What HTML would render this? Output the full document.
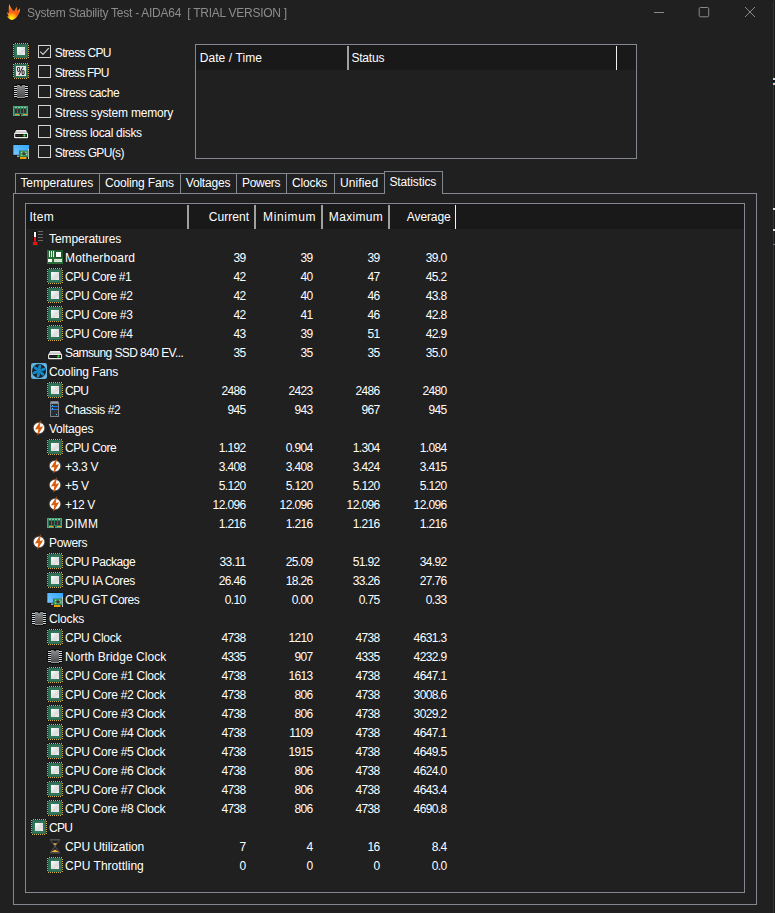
<!DOCTYPE html>
<html lang="en"><head><meta charset="utf-8"><title>System Stability Test - AIDA64</title>
<style>
html,body{margin:0;padding:0;}
body{width:775px;height:913px;overflow:hidden;background:#202020;position:relative;
 font-family:"Liberation Sans",sans-serif;font-size:12px;color:#fff;}
.a{position:absolute;white-space:nowrap;line-height:16px;height:16px;}
.t{position:absolute;white-space:nowrap;line-height:16px;height:16px;transform-origin:0 50%;}
.n{position:absolute;white-space:nowrap;line-height:16px;height:16px;text-align:right;width:60px;letter-spacing:-0.6px;}
.i{position:absolute;width:16px;height:16px;}
.i svg{display:block;}
.b{position:absolute;box-sizing:border-box;border:1px solid #828790;}
.cb{position:absolute;box-sizing:border-box;width:13px;height:13px;border:1px solid #d4d4d4;}
.ln{position:absolute;background:#828790;}
.sep{position:absolute;width:1px;background:#a0a0a0;}
</style></head><body>
<svg width="0" height="0" style="position:absolute"><defs>
<linearGradient id="gw" x1="0" y1="0" x2="1" y2="1"><stop offset="0" stop-color="#ffffff"/><stop offset="0.6" stop-color="#dcdcdc"/><stop offset="1" stop-color="#f0f0f0"/></linearGradient>
<linearGradient id="gc" x1="0" y1="0" x2="0" y2="1"><stop offset="0" stop-color="#8a8a8a"/><stop offset="1" stop-color="#4a4a4a"/></linearGradient>
<linearGradient id="gd" x1="0" y1="0" x2="0" y2="1"><stop offset="0" stop-color="#f2f2f2"/><stop offset="1" stop-color="#b4b4b4"/></linearGradient>
<linearGradient id="gm" x1="0" y1="1" x2="1" y2="0"><stop offset="0" stop-color="#7cc8ff"/><stop offset="1" stop-color="#2fa6ff"/></linearGradient>
<radialGradient id="gf" gradientUnits="userSpaceOnUse" cx="11.6" cy="18.6" r="14"><stop offset="0" stop-color="#fff21a"/><stop offset="0.12" stop-color="#ffdc10"/><stop offset="0.3" stop-color="#ffa010"/><stop offset="0.46" stop-color="#f8641a"/><stop offset="0.6" stop-color="#f6581a"/><stop offset="0.8" stop-color="#ff9014"/><stop offset="1" stop-color="#ffaa20"/></radialGradient>
</defs></svg>

<svg class="a" style="left:0;top:0;width:26px;height:24px" width="26" height="24" viewBox="0 0 26 24"><path d="M9.3 3.8 C9.9 6.6 11.4 8.6 13.2 10.6 L14 10.9 C15.1 9.6 16.1 8.5 16.5 6.5 C16.9 8.4 17 9.6 17.3 10.9 C18.3 10.2 19.3 9.4 19.9 8 C20.3 11 19.2 14 17.2 16.4 C15.6 18.4 13.6 20 11.6 20 C9.9 19.8 8.4 18.3 7 16.5 L8.7 16.3 C7.8 15 7.2 13.6 6.8 12 L8.9 13 C8.5 10 8.7 7 9.3 3.8 Z" fill="url(#gf)"/></svg>
<div class="t" style="left:26.70px;top:5px;letter-spacing:-0.258px;color:#8c8c8c;white-space:pre;will-change:transform">System Stability Test - AIDA64  [ TRIAL VERSION ]</div>
<svg class="a" style="left:640px;top:0;width:135px;height:30px" width="135" height="30" viewBox="0 0 135 30"><g stroke="#8a8a8a" stroke-width="1" fill="none"><path d="M14 12.5 H24"/><rect x="59.2" y="7.5" width="9.5" height="9.3" rx="1.2"/><path d="M105 7 L115 17 M115 7 L105 17"/></g></svg>
<div class="i" style="left:13px;top:43px;will-change:transform"><svg width="16" height="16" viewBox="0 0 16 16" shape-rendering="crispEdges"><rect x="0" y="0" width="16" height="16" fill="#141414"/><rect x="1" y="1" width="14" height="14" fill="#2a6650"/><rect x="2" y="2" width="12" height="12" fill="#33755a"/><rect x="4" y="4" width="8" height="8" fill="url(#gw)"/><g fill="#e0b040"><rect x="2" y="0" width="1" height="1"/><rect x="4" y="0" width="1" height="1"/><rect x="6" y="0" width="1" height="1"/><rect x="8" y="0" width="1" height="1"/><rect x="10" y="0" width="1" height="1"/><rect x="12" y="0" width="1" height="1"/><rect x="14" y="0" width="1" height="1"/><rect x="1" y="15" width="1" height="1"/><rect x="3" y="15" width="1" height="1"/><rect x="5" y="15" width="1" height="1"/><rect x="7" y="15" width="1" height="1"/><rect x="9" y="15" width="1" height="1"/><rect x="11" y="15" width="1" height="1"/><rect x="13" y="15" width="1" height="1"/><rect x="0" y="1" width="1" height="1"/><rect x="0" y="3" width="1" height="1"/><rect x="0" y="5" width="1" height="1"/><rect x="0" y="7" width="1" height="1"/><rect x="0" y="9" width="1" height="1"/><rect x="0" y="11" width="1" height="1"/><rect x="0" y="13" width="1" height="1"/><rect x="15" y="2" width="1" height="1"/><rect x="15" y="4" width="1" height="1"/><rect x="15" y="6" width="1" height="1"/><rect x="15" y="8" width="1" height="1"/><rect x="15" y="10" width="1" height="1"/><rect x="15" y="12" width="1" height="1"/><rect x="15" y="14" width="1" height="1"/></g></svg></div>
<div class="cb" style="left:38px;top:45px"><svg width="11" height="11" viewBox="0 0 11 11" style="display:block"><path d="M1.3 5.6 L4 8.3 L9.8 2.2" fill="none" stroke="#cfcfcf" stroke-width="1.2"/></svg></div>
<div class="t" style="left:54.80px;top:45px;letter-spacing:-0.669px;">Stress CPU</div>
<div class="i" style="left:13px;top:63px;will-change:transform"><svg width="16" height="16" viewBox="0 0 16 16" ><rect x="0" y="0" width="16" height="16" fill="#141414" shape-rendering="crispEdges"/><rect x="1" y="1" width="14" height="14" fill="#2a6650" shape-rendering="crispEdges"/><rect x="2" y="2" width="12" height="12" fill="#33755a" shape-rendering="crispEdges"/><rect x="3" y="3" width="10" height="10" fill="#e4e4e4" shape-rendering="crispEdges"/><g fill="#e0b040" shape-rendering="crispEdges"><rect x="2" y="0" width="1" height="1"/><rect x="4" y="0" width="1" height="1"/><rect x="6" y="0" width="1" height="1"/><rect x="8" y="0" width="1" height="1"/><rect x="10" y="0" width="1" height="1"/><rect x="12" y="0" width="1" height="1"/><rect x="14" y="0" width="1" height="1"/><rect x="1" y="15" width="1" height="1"/><rect x="3" y="15" width="1" height="1"/><rect x="5" y="15" width="1" height="1"/><rect x="7" y="15" width="1" height="1"/><rect x="9" y="15" width="1" height="1"/><rect x="11" y="15" width="1" height="1"/><rect x="13" y="15" width="1" height="1"/><rect x="0" y="1" width="1" height="1"/><rect x="0" y="3" width="1" height="1"/><rect x="0" y="5" width="1" height="1"/><rect x="0" y="7" width="1" height="1"/><rect x="0" y="9" width="1" height="1"/><rect x="0" y="11" width="1" height="1"/><rect x="0" y="13" width="1" height="1"/><rect x="15" y="2" width="1" height="1"/><rect x="15" y="4" width="1" height="1"/><rect x="15" y="6" width="1" height="1"/><rect x="15" y="8" width="1" height="1"/><rect x="15" y="10" width="1" height="1"/><rect x="15" y="12" width="1" height="1"/><rect x="15" y="14" width="1" height="1"/></g><text transform="translate(8,12.4) scale(0.8,1)" font-family="Liberation Sans, sans-serif" font-size="11" text-anchor="middle" fill="#000" stroke="#000" stroke-width="0.2">%</text></svg></div>
<div class="cb" style="left:38px;top:65px"></div>
<div class="t" style="left:54.80px;top:65px;letter-spacing:-0.734px;">Stress FPU</div>
<div class="i" style="left:13px;top:83px;will-change:transform"><svg width="16" height="16" viewBox="0 0 16 16" ><rect x="0.5" y="2.2" width="15" height="12.6" rx="0.8" fill="#0b0b0b"/><rect x="3.2" y="1" width="9.6" height="15" rx="1.2" fill="#0b0b0b"/><g shape-rendering="crispEdges"><rect x="1" y="3" width="3" height="1" fill="#cdd5df"/><rect x="12" y="3" width="3" height="1" fill="#cdd5df"/><rect x="1" y="5" width="3" height="1" fill="#cdd5df"/><rect x="12" y="5" width="3" height="1" fill="#cdd5df"/><rect x="1" y="7" width="3" height="1" fill="#cdd5df"/><rect x="12" y="7" width="3" height="1" fill="#cdd5df"/><rect x="1" y="9" width="3" height="1" fill="#cdd5df"/><rect x="12" y="9" width="3" height="1" fill="#cdd5df"/><rect x="1" y="11" width="3" height="1" fill="#cdd5df"/><rect x="12" y="11" width="3" height="1" fill="#cdd5df"/><rect x="1" y="13" width="3" height="1" fill="#cdd5df"/><rect x="12" y="13" width="3" height="1" fill="#cdd5df"/></g><rect x="4" y="2" width="8" height="12.8" fill="url(#gc)"/><path d="M5.4 1 L8 3.6 L10.6 1 Z" fill="#0b0b0b"/><path d="M4 2 L5.6 2 L8 4.4 L10.4 2 L12 2 L12 2.8 L10.8 2.8 L8 5.4 L5.2 2.8 L4 2.8 Z" fill="#9c9c9c" opacity="0.55"/><rect x="4" y="14" width="8" height="0.8" fill="#a8a8a8"/></svg></div>
<div class="cb" style="left:38px;top:85px"></div>
<div class="t" style="left:54.80px;top:85px;letter-spacing:-0.415px;">Stress cache</div>
<div class="i" style="left:13px;top:103px;will-change:transform"><svg width="16" height="16" viewBox="0 0 16 16" shape-rendering="crispEdges"><g transform="translate(0,3)"><rect x="0" y="0" width="15" height="10" fill="#4aa97c"/><rect x="1" y="1" width="13" height="8" fill="#2c7a56"/><rect x="2" y="1" width="2" height="1" fill="#8fc9a0"/><rect x="5" y="1" width="2" height="1" fill="#8fc9a0"/><rect x="8" y="1" width="2" height="1" fill="#8fc9a0"/><rect x="11" y="1" width="2" height="1" fill="#8fc9a0"/><rect x="2" y="3" width="2" height="4" fill="#3a2a30"/><rect x="5" y="3" width="2" height="4" fill="#3a2a30"/><rect x="8" y="3" width="2" height="4" fill="#3a2a30"/><rect x="11" y="3" width="2" height="4" fill="#3a2a30"/><rect x="2" y="8" width="4" height="1" fill="#e89a3c"/><rect x="10" y="8" width="4" height="1" fill="#e89a3c"/><rect x="7" y="8" width="1" height="2" fill="#1a1a1a"/></g></svg></div>
<div class="cb" style="left:38px;top:105px"></div>
<div class="t" style="left:54.80px;top:105px;letter-spacing:-0.181px;">Stress system memory</div>
<div class="i" style="left:13px;top:123px;will-change:transform"><svg width="16" height="16" viewBox="0 0 16 16" ><path d="M2.9 6.5 L13.3 6.5 L15.7 10 L15.7 15 Q15.7 15.7 15 15.7 L1.2 15.7 Q0.5 15.7 0.5 15 L0.5 10 Z" fill="#141414"/><path d="M3.3 7.1 L12.9 7.1 L15 10.4 L1.2 10.4 Z" fill="url(#gd)"/><rect x="1.1" y="10.1" width="14" height="5.1" rx="0.8" fill="#ededed"/><rect x="2.2" y="11" width="11.8" height="2.9" rx="0.3" fill="#141414"/><rect x="2.6" y="11.9" width="8" height="1" fill="#2c2c2c"/><circle cx="11.4" cy="12.45" r="1.5" fill="#1f8f1f" opacity="0.7"/><circle cx="11.4" cy="12.45" r="0.95" fill="#40f040"/></svg></div>
<div class="cb" style="left:38px;top:125px"></div>
<div class="t" style="left:54.80px;top:125px;letter-spacing:-0.317px;">Stress local disks</div>
<div class="i" style="left:13px;top:143px;will-change:transform"><svg width="16" height="16" viewBox="0 0 16 16" ><rect x="0" y="1.5" width="16" height="10.8" fill="#151210"/><rect x="0.3" y="2" width="15.7" height="9.8" fill="url(#gm)"/><rect x="4" y="12.6" width="3" height="1.2" fill="#b9c6e6"/><rect x="15" y="6" width="1.1" height="10" fill="#c9c9c9"/><rect x="6" y="7.6" width="9.2" height="6.4" fill="#1d6b3c"/><rect x="6.6" y="8.1" width="8.4" height="5.4" fill="#3d9a5c"/><rect x="9.5" y="9.5" width="3" height="2.3" fill="#4a2c36"/><g fill="#dfe8df"><rect x="8.2" y="8.8" width="1" height="1"/><rect x="12.3" y="8.8" width="1" height="1"/><rect x="8.2" y="11.8" width="1" height="1"/><rect x="13.2" y="10.8" width="1" height="1"/></g><rect x="7" y="14" width="6.4" height="2" fill="#f5a800"/><rect x="8.6" y="14" width="0.5" height="2" fill="#d88a00"/><rect x="10.2" y="14" width="0.5" height="2" fill="#d88a00"/><rect x="11.8" y="14" width="0.5" height="2" fill="#d88a00"/></svg></div>
<div class="cb" style="left:38px;top:145px"></div>
<div class="t" style="left:54.80px;top:145px;letter-spacing:-0.642px;">Stress GPU(s)</div>
<div class="b" style="left:195px;top:44px;width:442px;height:115px"></div>
<div class="a" style="left:196px;top:45px;width:440px;height:25px;background:#191919"></div>
<div class="t" style="left:199.70px;top:50px;letter-spacing:0.086px;">Date / Time</div>
<div class="t" style="left:351.40px;top:50px;letter-spacing:-0.205px;">Status</div>
<div class="sep" style="left:347px;top:46px;height:24px;width:2px"></div>
<div class="sep" style="left:616px;top:46px;height:24px;background:#f0f0f0"></div>
<div class="b" style="left:15px;top:173px;width:85px;height:21px;border-bottom:none"></div>
<div class="t" style="left:20.40px;top:175px;letter-spacing:-0.048px;">Temperatures</div>
<div class="b" style="left:99px;top:173px;width:82px;height:21px;border-bottom:none"></div>
<div class="t" style="left:105.00px;top:175px;letter-spacing:-0.160px;">Cooling Fans</div>
<div class="b" style="left:180px;top:173px;width:57px;height:21px;border-bottom:none"></div>
<div class="t" style="left:185.80px;top:175px;letter-spacing:-0.206px;">Voltages</div>
<div class="b" style="left:236px;top:173px;width:51px;height:21px;border-bottom:none"></div>
<div class="t" style="left:242.00px;top:175px;letter-spacing:-0.303px;">Powers</div>
<div class="b" style="left:286px;top:173px;width:49px;height:21px;border-bottom:none"></div>
<div class="t" style="left:292.00px;top:175px;letter-spacing:-0.136px;">Clocks</div>
<div class="b" style="left:334px;top:173px;width:51px;height:21px;border-bottom:none"></div>
<div class="t" style="left:340.00px;top:175px;letter-spacing:0.120px;">Unified</div>
<div class="b" style="left:13px;top:193px;width:744px;height:712px"></div>
<div class="b" style="left:384px;top:171px;width:59px;height:23px;border-bottom:none;background:#202020"></div>
<div class="t" style="left:389.40px;top:174px;letter-spacing:-0.122px;">Statistics</div>
<div class="b" style="left:25px;top:203px;width:720px;height:690px"></div>
<div class="a" style="left:26px;top:204px;width:718px;height:25px;background:#191919"></div>
<div class="t" style="left:29.40px;top:209px;letter-spacing:0.364px;">Item</div>
<div class="t" style="left:208.80px;top:209px;letter-spacing:0.055px;">Current</div>
<div class="t" style="left:263.00px;top:209px;letter-spacing:0.647px;">Minimum</div>
<div class="t" style="left:328.80px;top:209px;letter-spacing:0.341px;">Maximum</div>
<div class="t" style="left:406.80px;top:209px;letter-spacing:-0.098px;">Average</div>
<div class="sep" style="left:187px;top:205px;height:24px;width:2px"></div>
<div class="sep" style="left:254px;top:205px;height:24px;width:2px"></div>
<div class="sep" style="left:321px;top:205px;height:24px;width:2px"></div>
<div class="sep" style="left:388px;top:205px;height:24px;width:2px"></div>
<div class="sep" style="left:455px;top:205px;height:24px;background:#f0f0f0"></div>
<div class="i" style="left:31px;top:230px"><svg width="16" height="16" viewBox="0 0 16 16" ><g shape-rendering="crispEdges"><rect x="2" y="1" width="4" height="12" fill="#16191a"/><rect x="3" y="2" width="2" height="5" fill="#ffffff"/><rect x="3" y="7" width="2" height="6" fill="#f01010"/><rect x="7" y="1" width="5" height="1" fill="#686868"/><rect x="7" y="4" width="5" height="1" fill="#686868"/><rect x="7" y="7" width="5" height="1" fill="#686868"/><rect x="7" y="10" width="5" height="1" fill="#686868"/></g><rect x="1.6" y="11.6" width="5.2" height="4" rx="1.2" fill="#2a3a3c"/><rect x="2.2" y="12" width="4" height="3.1" rx="0.8" fill="#f01010"/></svg></div>
<div class="t" style="left:49.00px;top:231px;letter-spacing:-0.098px;">Temperatures</div>
<div class="i" style="left:47px;top:249px"><svg width="16" height="16" viewBox="0 0 16 16" shape-rendering="crispEdges"><rect x="0" y="1" width="16" height="14" fill="#2c6e3a"/><rect x="8" y="1" width="8" height="8" fill="#1f5a2c"/><rect x="2" y="2" width="1" height="6" fill="#f4f8f0"/><rect x="4" y="2" width="1" height="6" fill="#f4f8f0"/><rect x="6" y="2" width="1" height="6" fill="#f4f8f0"/><rect x="9" y="3" width="5" height="5" fill="#ffffff"/><rect x="1" y="10" width="4" height="3" fill="#ffffff"/><rect x="7" y="10" width="8" height="3" fill="#dfe8d6"/><rect x="7" y="11" width="8" height="1" fill="#cbd8c2"/></svg></div>
<div class="t" style="left:65.00px;top:250px;letter-spacing:0.196px;">Motherboard</div>
<div class="n" style="left:185.7px;top:250px">39</div>
<div class="n" style="left:252.7px;top:250px">39</div>
<div class="n" style="left:319.7px;top:250px">39</div>
<div class="n" style="left:386.7px;top:250px">39.0</div>
<div class="i" style="left:47px;top:268px"><svg width="16" height="16" viewBox="0 0 16 16" shape-rendering="crispEdges"><rect x="0" y="0" width="16" height="16" fill="#141414"/><rect x="1" y="1" width="14" height="14" fill="#2a6650"/><rect x="2" y="2" width="12" height="12" fill="#33755a"/><rect x="4" y="4" width="8" height="8" fill="url(#gw)"/><g fill="#e0b040"><rect x="2" y="0" width="1" height="1"/><rect x="4" y="0" width="1" height="1"/><rect x="6" y="0" width="1" height="1"/><rect x="8" y="0" width="1" height="1"/><rect x="10" y="0" width="1" height="1"/><rect x="12" y="0" width="1" height="1"/><rect x="14" y="0" width="1" height="1"/><rect x="1" y="15" width="1" height="1"/><rect x="3" y="15" width="1" height="1"/><rect x="5" y="15" width="1" height="1"/><rect x="7" y="15" width="1" height="1"/><rect x="9" y="15" width="1" height="1"/><rect x="11" y="15" width="1" height="1"/><rect x="13" y="15" width="1" height="1"/><rect x="0" y="1" width="1" height="1"/><rect x="0" y="3" width="1" height="1"/><rect x="0" y="5" width="1" height="1"/><rect x="0" y="7" width="1" height="1"/><rect x="0" y="9" width="1" height="1"/><rect x="0" y="11" width="1" height="1"/><rect x="0" y="13" width="1" height="1"/><rect x="15" y="2" width="1" height="1"/><rect x="15" y="4" width="1" height="1"/><rect x="15" y="6" width="1" height="1"/><rect x="15" y="8" width="1" height="1"/><rect x="15" y="10" width="1" height="1"/><rect x="15" y="12" width="1" height="1"/><rect x="15" y="14" width="1" height="1"/></g></svg></div>
<div class="t" style="left:65.00px;top:269px;letter-spacing:-0.470px;">CPU Core #1</div>
<div class="n" style="left:185.7px;top:269px">42</div>
<div class="n" style="left:252.7px;top:269px">40</div>
<div class="n" style="left:319.7px;top:269px">47</div>
<div class="n" style="left:386.7px;top:269px">45.2</div>
<div class="i" style="left:47px;top:287px"><svg width="16" height="16" viewBox="0 0 16 16" shape-rendering="crispEdges"><rect x="0" y="0" width="16" height="16" fill="#141414"/><rect x="1" y="1" width="14" height="14" fill="#2a6650"/><rect x="2" y="2" width="12" height="12" fill="#33755a"/><rect x="4" y="4" width="8" height="8" fill="url(#gw)"/><g fill="#e0b040"><rect x="2" y="0" width="1" height="1"/><rect x="4" y="0" width="1" height="1"/><rect x="6" y="0" width="1" height="1"/><rect x="8" y="0" width="1" height="1"/><rect x="10" y="0" width="1" height="1"/><rect x="12" y="0" width="1" height="1"/><rect x="14" y="0" width="1" height="1"/><rect x="1" y="15" width="1" height="1"/><rect x="3" y="15" width="1" height="1"/><rect x="5" y="15" width="1" height="1"/><rect x="7" y="15" width="1" height="1"/><rect x="9" y="15" width="1" height="1"/><rect x="11" y="15" width="1" height="1"/><rect x="13" y="15" width="1" height="1"/><rect x="0" y="1" width="1" height="1"/><rect x="0" y="3" width="1" height="1"/><rect x="0" y="5" width="1" height="1"/><rect x="0" y="7" width="1" height="1"/><rect x="0" y="9" width="1" height="1"/><rect x="0" y="11" width="1" height="1"/><rect x="0" y="13" width="1" height="1"/><rect x="15" y="2" width="1" height="1"/><rect x="15" y="4" width="1" height="1"/><rect x="15" y="6" width="1" height="1"/><rect x="15" y="8" width="1" height="1"/><rect x="15" y="10" width="1" height="1"/><rect x="15" y="12" width="1" height="1"/><rect x="15" y="14" width="1" height="1"/></g></svg></div>
<div class="t" style="left:65.00px;top:288px;letter-spacing:-0.352px;">CPU Core #2</div>
<div class="n" style="left:185.7px;top:288px">42</div>
<div class="n" style="left:252.7px;top:288px">40</div>
<div class="n" style="left:319.7px;top:288px">46</div>
<div class="n" style="left:386.7px;top:288px">43.8</div>
<div class="i" style="left:47px;top:306px"><svg width="16" height="16" viewBox="0 0 16 16" shape-rendering="crispEdges"><rect x="0" y="0" width="16" height="16" fill="#141414"/><rect x="1" y="1" width="14" height="14" fill="#2a6650"/><rect x="2" y="2" width="12" height="12" fill="#33755a"/><rect x="4" y="4" width="8" height="8" fill="url(#gw)"/><g fill="#e0b040"><rect x="2" y="0" width="1" height="1"/><rect x="4" y="0" width="1" height="1"/><rect x="6" y="0" width="1" height="1"/><rect x="8" y="0" width="1" height="1"/><rect x="10" y="0" width="1" height="1"/><rect x="12" y="0" width="1" height="1"/><rect x="14" y="0" width="1" height="1"/><rect x="1" y="15" width="1" height="1"/><rect x="3" y="15" width="1" height="1"/><rect x="5" y="15" width="1" height="1"/><rect x="7" y="15" width="1" height="1"/><rect x="9" y="15" width="1" height="1"/><rect x="11" y="15" width="1" height="1"/><rect x="13" y="15" width="1" height="1"/><rect x="0" y="1" width="1" height="1"/><rect x="0" y="3" width="1" height="1"/><rect x="0" y="5" width="1" height="1"/><rect x="0" y="7" width="1" height="1"/><rect x="0" y="9" width="1" height="1"/><rect x="0" y="11" width="1" height="1"/><rect x="0" y="13" width="1" height="1"/><rect x="15" y="2" width="1" height="1"/><rect x="15" y="4" width="1" height="1"/><rect x="15" y="6" width="1" height="1"/><rect x="15" y="8" width="1" height="1"/><rect x="15" y="10" width="1" height="1"/><rect x="15" y="12" width="1" height="1"/><rect x="15" y="14" width="1" height="1"/></g></svg></div>
<div class="t" style="left:65.00px;top:307px;letter-spacing:-0.352px;">CPU Core #3</div>
<div class="n" style="left:185.7px;top:307px">42</div>
<div class="n" style="left:252.7px;top:307px">41</div>
<div class="n" style="left:319.7px;top:307px">46</div>
<div class="n" style="left:386.7px;top:307px">42.8</div>
<div class="i" style="left:47px;top:325px"><svg width="16" height="16" viewBox="0 0 16 16" shape-rendering="crispEdges"><rect x="0" y="0" width="16" height="16" fill="#141414"/><rect x="1" y="1" width="14" height="14" fill="#2a6650"/><rect x="2" y="2" width="12" height="12" fill="#33755a"/><rect x="4" y="4" width="8" height="8" fill="url(#gw)"/><g fill="#e0b040"><rect x="2" y="0" width="1" height="1"/><rect x="4" y="0" width="1" height="1"/><rect x="6" y="0" width="1" height="1"/><rect x="8" y="0" width="1" height="1"/><rect x="10" y="0" width="1" height="1"/><rect x="12" y="0" width="1" height="1"/><rect x="14" y="0" width="1" height="1"/><rect x="1" y="15" width="1" height="1"/><rect x="3" y="15" width="1" height="1"/><rect x="5" y="15" width="1" height="1"/><rect x="7" y="15" width="1" height="1"/><rect x="9" y="15" width="1" height="1"/><rect x="11" y="15" width="1" height="1"/><rect x="13" y="15" width="1" height="1"/><rect x="0" y="1" width="1" height="1"/><rect x="0" y="3" width="1" height="1"/><rect x="0" y="5" width="1" height="1"/><rect x="0" y="7" width="1" height="1"/><rect x="0" y="9" width="1" height="1"/><rect x="0" y="11" width="1" height="1"/><rect x="0" y="13" width="1" height="1"/><rect x="15" y="2" width="1" height="1"/><rect x="15" y="4" width="1" height="1"/><rect x="15" y="6" width="1" height="1"/><rect x="15" y="8" width="1" height="1"/><rect x="15" y="10" width="1" height="1"/><rect x="15" y="12" width="1" height="1"/><rect x="15" y="14" width="1" height="1"/></g></svg></div>
<div class="t" style="left:65.00px;top:326px;letter-spacing:-0.352px;">CPU Core #4</div>
<div class="n" style="left:185.7px;top:326px">43</div>
<div class="n" style="left:252.7px;top:326px">39</div>
<div class="n" style="left:319.7px;top:326px">51</div>
<div class="n" style="left:386.7px;top:326px">42.9</div>
<div class="i" style="left:47px;top:344px"><svg width="16" height="16" viewBox="0 0 16 16" ><path d="M2.9 6.5 L13.3 6.5 L15.7 10 L15.7 15 Q15.7 15.7 15 15.7 L1.2 15.7 Q0.5 15.7 0.5 15 L0.5 10 Z" fill="#141414"/><path d="M3.3 7.1 L12.9 7.1 L15 10.4 L1.2 10.4 Z" fill="url(#gd)"/><rect x="1.1" y="10.1" width="14" height="5.1" rx="0.8" fill="#ededed"/><rect x="2.2" y="11" width="11.8" height="2.9" rx="0.3" fill="#141414"/><rect x="2.6" y="11.9" width="8" height="1" fill="#2c2c2c"/><circle cx="11.4" cy="12.45" r="1.5" fill="#1f8f1f" opacity="0.7"/><circle cx="11.4" cy="12.45" r="0.95" fill="#40f040"/></svg></div>
<div class="t" style="left:65.00px;top:345px;letter-spacing:-0.577px;">Samsung SSD 840 EV...</div>
<div class="n" style="left:185.7px;top:345px">35</div>
<div class="n" style="left:252.7px;top:345px">35</div>
<div class="n" style="left:319.7px;top:345px">35</div>
<div class="n" style="left:386.7px;top:345px">35.0</div>
<div class="i" style="left:31px;top:363px"><svg width="16" height="16" viewBox="0 0 16 16" ><rect x="0" y="0" width="16" height="16" rx="2.2" fill="#62b4e0"/><circle cx="8" cy="8" r="7" fill="#1b1d20"/><ellipse transform="rotate(10 8 8)" cx="8" cy="4" rx="1.55" ry="2.7" fill="#1487c6"/><ellipse transform="rotate(70 8 8)" cx="8" cy="4" rx="1.55" ry="2.7" fill="#1487c6"/><ellipse transform="rotate(130 8 8)" cx="8" cy="4" rx="1.55" ry="2.7" fill="#1487c6"/><ellipse transform="rotate(190 8 8)" cx="8" cy="4" rx="1.55" ry="2.7" fill="#1487c6"/><ellipse transform="rotate(250 8 8)" cx="8" cy="4" rx="1.55" ry="2.7" fill="#1487c6"/><ellipse transform="rotate(310 8 8)" cx="8" cy="4" rx="1.55" ry="2.7" fill="#1487c6"/><circle cx="8" cy="8" r="2.2" fill="#1487c6"/></svg></div>
<div class="t" style="left:49.00px;top:364px;letter-spacing:-0.127px;">Cooling Fans</div>
<div class="i" style="left:47px;top:382px"><svg width="16" height="16" viewBox="0 0 16 16" shape-rendering="crispEdges"><rect x="0" y="0" width="16" height="16" fill="#141414"/><rect x="1" y="1" width="14" height="14" fill="#2a6650"/><rect x="2" y="2" width="12" height="12" fill="#33755a"/><rect x="4" y="4" width="8" height="8" fill="url(#gw)"/><g fill="#e0b040"><rect x="2" y="0" width="1" height="1"/><rect x="4" y="0" width="1" height="1"/><rect x="6" y="0" width="1" height="1"/><rect x="8" y="0" width="1" height="1"/><rect x="10" y="0" width="1" height="1"/><rect x="12" y="0" width="1" height="1"/><rect x="14" y="0" width="1" height="1"/><rect x="1" y="15" width="1" height="1"/><rect x="3" y="15" width="1" height="1"/><rect x="5" y="15" width="1" height="1"/><rect x="7" y="15" width="1" height="1"/><rect x="9" y="15" width="1" height="1"/><rect x="11" y="15" width="1" height="1"/><rect x="13" y="15" width="1" height="1"/><rect x="0" y="1" width="1" height="1"/><rect x="0" y="3" width="1" height="1"/><rect x="0" y="5" width="1" height="1"/><rect x="0" y="7" width="1" height="1"/><rect x="0" y="9" width="1" height="1"/><rect x="0" y="11" width="1" height="1"/><rect x="0" y="13" width="1" height="1"/><rect x="15" y="2" width="1" height="1"/><rect x="15" y="4" width="1" height="1"/><rect x="15" y="6" width="1" height="1"/><rect x="15" y="8" width="1" height="1"/><rect x="15" y="10" width="1" height="1"/><rect x="15" y="12" width="1" height="1"/><rect x="15" y="14" width="1" height="1"/></g></svg></div>
<div class="t" style="left:65.00px;top:383px;letter-spacing:-0.715px;">CPU</div>
<div class="n" style="left:185.7px;top:383px">2486</div>
<div class="n" style="left:252.7px;top:383px">2423</div>
<div class="n" style="left:319.7px;top:383px">2486</div>
<div class="n" style="left:386.7px;top:383px">2480</div>
<div class="i" style="left:47px;top:401px"><svg width="16" height="16" viewBox="0 0 16 16" ><path d="M3 16 V1.6 Q3 0 4.6 0 H10.4 Q12 0 12 1.6 V16 Z" fill="#7d828c"/><rect x="4" y="2.6" width="7" height="12.4" fill="#2b2d33"/><rect x="4" y="1" width="7" height="1.6" fill="#9a9fa8"/><g shape-rendering="crispEdges"><rect x="4" y="5" width="7" height="1" fill="#1e7fff"/><rect x="4" y="8" width="7" height="1" fill="#1e7fff"/><rect x="5" y="4" width="1" height="1" fill="#4fd8f0"/><rect x="5" y="7" width="1" height="1" fill="#4fd8f0"/><rect x="9" y="13" width="1" height="1" fill="#4fd8f0"/></g></svg></div>
<div class="t" style="left:65.00px;top:402px;letter-spacing:-0.417px;">Chassis #2</div>
<div class="n" style="left:185.7px;top:402px">945</div>
<div class="n" style="left:252.7px;top:402px">943</div>
<div class="n" style="left:319.7px;top:402px">967</div>
<div class="n" style="left:386.7px;top:402px">945</div>
<div class="i" style="left:31px;top:420px"><svg width="16" height="16" viewBox="0 0 16 16" ><circle cx="8" cy="8" r="6.2" fill="#4a4a4a"/><circle cx="8" cy="8" r="5.3" fill="#ffffff"/><path d="M9.9 0 L3.9 9.5 L7.3 8.9 L6.3 15.9 L12.2 6.3 L8.8 7 Z" fill="#d95f0e"/></svg></div>
<div class="t" style="left:49.00px;top:421px;letter-spacing:-0.231px;">Voltages</div>
<div class="i" style="left:47px;top:439px"><svg width="16" height="16" viewBox="0 0 16 16" shape-rendering="crispEdges"><rect x="0" y="0" width="16" height="16" fill="#141414"/><rect x="1" y="1" width="14" height="14" fill="#2a6650"/><rect x="2" y="2" width="12" height="12" fill="#33755a"/><rect x="4" y="4" width="8" height="8" fill="url(#gw)"/><g fill="#e0b040"><rect x="2" y="0" width="1" height="1"/><rect x="4" y="0" width="1" height="1"/><rect x="6" y="0" width="1" height="1"/><rect x="8" y="0" width="1" height="1"/><rect x="10" y="0" width="1" height="1"/><rect x="12" y="0" width="1" height="1"/><rect x="14" y="0" width="1" height="1"/><rect x="1" y="15" width="1" height="1"/><rect x="3" y="15" width="1" height="1"/><rect x="5" y="15" width="1" height="1"/><rect x="7" y="15" width="1" height="1"/><rect x="9" y="15" width="1" height="1"/><rect x="11" y="15" width="1" height="1"/><rect x="13" y="15" width="1" height="1"/><rect x="0" y="1" width="1" height="1"/><rect x="0" y="3" width="1" height="1"/><rect x="0" y="5" width="1" height="1"/><rect x="0" y="7" width="1" height="1"/><rect x="0" y="9" width="1" height="1"/><rect x="0" y="11" width="1" height="1"/><rect x="0" y="13" width="1" height="1"/><rect x="15" y="2" width="1" height="1"/><rect x="15" y="4" width="1" height="1"/><rect x="15" y="6" width="1" height="1"/><rect x="15" y="8" width="1" height="1"/><rect x="15" y="10" width="1" height="1"/><rect x="15" y="12" width="1" height="1"/><rect x="15" y="14" width="1" height="1"/></g></svg></div>
<div class="t" style="left:65.00px;top:440px;letter-spacing:-0.436px;">CPU Core</div>
<div class="n" style="left:185.7px;top:440px">1.192</div>
<div class="n" style="left:252.7px;top:440px">0.904</div>
<div class="n" style="left:319.7px;top:440px">1.304</div>
<div class="n" style="left:386.7px;top:440px">1.084</div>
<div class="i" style="left:47px;top:458px"><svg width="16" height="16" viewBox="0 0 16 16" ><circle cx="8" cy="8" r="6.2" fill="#4a4a4a"/><circle cx="8" cy="8" r="5.3" fill="#ffffff"/><path d="M9.9 0 L3.9 9.5 L7.3 8.9 L6.3 15.9 L12.2 6.3 L8.8 7 Z" fill="#d95f0e"/></svg></div>
<div class="t" style="left:65.00px;top:459px;letter-spacing:-0.305px;">+3.3 V</div>
<div class="n" style="left:185.7px;top:459px">3.408</div>
<div class="n" style="left:252.7px;top:459px">3.408</div>
<div class="n" style="left:319.7px;top:459px">3.424</div>
<div class="n" style="left:386.7px;top:459px">3.415</div>
<div class="i" style="left:47px;top:477px"><svg width="16" height="16" viewBox="0 0 16 16" ><circle cx="8" cy="8" r="6.2" fill="#4a4a4a"/><circle cx="8" cy="8" r="5.3" fill="#ffffff"/><path d="M9.9 0 L3.9 9.5 L7.3 8.9 L6.3 15.9 L12.2 6.3 L8.8 7 Z" fill="#d95f0e"/></svg></div>
<div class="t" style="left:65.00px;top:478px;letter-spacing:-0.308px;">+5 V</div>
<div class="n" style="left:185.7px;top:478px">5.120</div>
<div class="n" style="left:252.7px;top:478px">5.120</div>
<div class="n" style="left:319.7px;top:478px">5.120</div>
<div class="n" style="left:386.7px;top:478px">5.120</div>
<div class="i" style="left:47px;top:496px"><svg width="16" height="16" viewBox="0 0 16 16" ><circle cx="8" cy="8" r="6.2" fill="#4a4a4a"/><circle cx="8" cy="8" r="5.3" fill="#ffffff"/><path d="M9.9 0 L3.9 9.5 L7.3 8.9 L6.3 15.9 L12.2 6.3 L8.8 7 Z" fill="#d95f0e"/></svg></div>
<div class="t" style="left:65.00px;top:497px;letter-spacing:-0.381px;">+12 V</div>
<div class="n" style="left:185.7px;top:497px">12.096</div>
<div class="n" style="left:252.7px;top:497px">12.096</div>
<div class="n" style="left:319.7px;top:497px">12.096</div>
<div class="n" style="left:386.7px;top:497px">12.096</div>
<div class="i" style="left:47px;top:515px"><svg width="16" height="16" viewBox="0 0 16 16" shape-rendering="crispEdges"><g transform="translate(0,3)"><rect x="0" y="0" width="15" height="10" fill="#4aa97c"/><rect x="1" y="1" width="13" height="8" fill="#2c7a56"/><rect x="2" y="1" width="2" height="1" fill="#8fc9a0"/><rect x="5" y="1" width="2" height="1" fill="#8fc9a0"/><rect x="8" y="1" width="2" height="1" fill="#8fc9a0"/><rect x="11" y="1" width="2" height="1" fill="#8fc9a0"/><rect x="2" y="3" width="2" height="4" fill="#3a2a30"/><rect x="5" y="3" width="2" height="4" fill="#3a2a30"/><rect x="8" y="3" width="2" height="4" fill="#3a2a30"/><rect x="11" y="3" width="2" height="4" fill="#3a2a30"/><rect x="2" y="8" width="4" height="1" fill="#e89a3c"/><rect x="10" y="8" width="4" height="1" fill="#e89a3c"/><rect x="7" y="8" width="1" height="2" fill="#1a1a1a"/></g></svg></div>
<div class="t" style="left:65.00px;top:516px;letter-spacing:0.300px;">DIMM</div>
<div class="n" style="left:185.7px;top:516px">1.216</div>
<div class="n" style="left:252.7px;top:516px">1.216</div>
<div class="n" style="left:319.7px;top:516px">1.216</div>
<div class="n" style="left:386.7px;top:516px">1.216</div>
<div class="i" style="left:31px;top:534px"><svg width="16" height="16" viewBox="0 0 16 16" ><circle cx="8" cy="8" r="6.2" fill="#4a4a4a"/><circle cx="8" cy="8" r="5.3" fill="#ffffff"/><path d="M9.9 0 L3.9 9.5 L7.3 8.9 L6.3 15.9 L12.2 6.3 L8.8 7 Z" fill="#d95f0e"/></svg></div>
<div class="t" style="left:49.00px;top:535px;letter-spacing:-0.303px;">Powers</div>
<div class="i" style="left:47px;top:553px"><svg width="16" height="16" viewBox="0 0 16 16" shape-rendering="crispEdges"><rect x="0" y="0" width="16" height="16" fill="#141414"/><rect x="1" y="1" width="14" height="14" fill="#2a6650"/><rect x="2" y="2" width="12" height="12" fill="#33755a"/><rect x="4" y="4" width="8" height="8" fill="url(#gw)"/><g fill="#e0b040"><rect x="2" y="0" width="1" height="1"/><rect x="4" y="0" width="1" height="1"/><rect x="6" y="0" width="1" height="1"/><rect x="8" y="0" width="1" height="1"/><rect x="10" y="0" width="1" height="1"/><rect x="12" y="0" width="1" height="1"/><rect x="14" y="0" width="1" height="1"/><rect x="1" y="15" width="1" height="1"/><rect x="3" y="15" width="1" height="1"/><rect x="5" y="15" width="1" height="1"/><rect x="7" y="15" width="1" height="1"/><rect x="9" y="15" width="1" height="1"/><rect x="11" y="15" width="1" height="1"/><rect x="13" y="15" width="1" height="1"/><rect x="0" y="1" width="1" height="1"/><rect x="0" y="3" width="1" height="1"/><rect x="0" y="5" width="1" height="1"/><rect x="0" y="7" width="1" height="1"/><rect x="0" y="9" width="1" height="1"/><rect x="0" y="11" width="1" height="1"/><rect x="0" y="13" width="1" height="1"/><rect x="15" y="2" width="1" height="1"/><rect x="15" y="4" width="1" height="1"/><rect x="15" y="6" width="1" height="1"/><rect x="15" y="8" width="1" height="1"/><rect x="15" y="10" width="1" height="1"/><rect x="15" y="12" width="1" height="1"/><rect x="15" y="14" width="1" height="1"/></g></svg></div>
<div class="t" style="left:65.00px;top:554px;letter-spacing:-0.470px;">CPU Package</div>
<div class="n" style="left:185.7px;top:554px">33.11</div>
<div class="n" style="left:252.7px;top:554px">25.09</div>
<div class="n" style="left:319.7px;top:554px">51.92</div>
<div class="n" style="left:386.7px;top:554px">34.92</div>
<div class="i" style="left:47px;top:572px"><svg width="16" height="16" viewBox="0 0 16 16" shape-rendering="crispEdges"><rect x="0" y="0" width="16" height="16" fill="#141414"/><rect x="1" y="1" width="14" height="14" fill="#2a6650"/><rect x="2" y="2" width="12" height="12" fill="#33755a"/><rect x="4" y="4" width="8" height="8" fill="url(#gw)"/><g fill="#e0b040"><rect x="2" y="0" width="1" height="1"/><rect x="4" y="0" width="1" height="1"/><rect x="6" y="0" width="1" height="1"/><rect x="8" y="0" width="1" height="1"/><rect x="10" y="0" width="1" height="1"/><rect x="12" y="0" width="1" height="1"/><rect x="14" y="0" width="1" height="1"/><rect x="1" y="15" width="1" height="1"/><rect x="3" y="15" width="1" height="1"/><rect x="5" y="15" width="1" height="1"/><rect x="7" y="15" width="1" height="1"/><rect x="9" y="15" width="1" height="1"/><rect x="11" y="15" width="1" height="1"/><rect x="13" y="15" width="1" height="1"/><rect x="0" y="1" width="1" height="1"/><rect x="0" y="3" width="1" height="1"/><rect x="0" y="5" width="1" height="1"/><rect x="0" y="7" width="1" height="1"/><rect x="0" y="9" width="1" height="1"/><rect x="0" y="11" width="1" height="1"/><rect x="0" y="13" width="1" height="1"/><rect x="15" y="2" width="1" height="1"/><rect x="15" y="4" width="1" height="1"/><rect x="15" y="6" width="1" height="1"/><rect x="15" y="8" width="1" height="1"/><rect x="15" y="10" width="1" height="1"/><rect x="15" y="12" width="1" height="1"/><rect x="15" y="14" width="1" height="1"/></g></svg></div>
<div class="t" style="left:65.00px;top:573px;letter-spacing:-0.409px;">CPU IA Cores</div>
<div class="n" style="left:185.7px;top:573px">26.46</div>
<div class="n" style="left:252.7px;top:573px">18.26</div>
<div class="n" style="left:319.7px;top:573px">33.26</div>
<div class="n" style="left:386.7px;top:573px">27.76</div>
<div class="i" style="left:47px;top:591px"><svg width="16" height="16" viewBox="0 0 16 16" ><rect x="0" y="1.5" width="16" height="10.8" fill="#151210"/><rect x="0.3" y="2" width="15.7" height="9.8" fill="url(#gm)"/><rect x="4" y="12.6" width="3" height="1.2" fill="#b9c6e6"/><rect x="15" y="6" width="1.1" height="10" fill="#c9c9c9"/><rect x="6" y="7.6" width="9.2" height="6.4" fill="#1d6b3c"/><rect x="6.6" y="8.1" width="8.4" height="5.4" fill="#3d9a5c"/><rect x="9.5" y="9.5" width="3" height="2.3" fill="#4a2c36"/><g fill="#dfe8df"><rect x="8.2" y="8.8" width="1" height="1"/><rect x="12.3" y="8.8" width="1" height="1"/><rect x="8.2" y="11.8" width="1" height="1"/><rect x="13.2" y="10.8" width="1" height="1"/></g><rect x="7" y="14" width="6.4" height="2" fill="#f5a800"/><rect x="8.6" y="14" width="0.5" height="2" fill="#d88a00"/><rect x="10.2" y="14" width="0.5" height="2" fill="#d88a00"/><rect x="11.8" y="14" width="0.5" height="2" fill="#d88a00"/></svg></div>
<div class="t" style="left:65.00px;top:592px;letter-spacing:-0.522px;">CPU GT Cores</div>
<div class="n" style="left:185.7px;top:592px">0.10</div>
<div class="n" style="left:252.7px;top:592px">0.00</div>
<div class="n" style="left:319.7px;top:592px">0.75</div>
<div class="n" style="left:386.7px;top:592px">0.33</div>
<div class="i" style="left:31px;top:610px"><svg width="16" height="16" viewBox="0 0 16 16" ><rect x="0.5" y="2.2" width="15" height="12.6" rx="0.8" fill="#0b0b0b"/><rect x="3.2" y="1" width="9.6" height="15" rx="1.2" fill="#0b0b0b"/><g shape-rendering="crispEdges"><rect x="1" y="3" width="3" height="1" fill="#cdd5df"/><rect x="12" y="3" width="3" height="1" fill="#cdd5df"/><rect x="1" y="5" width="3" height="1" fill="#cdd5df"/><rect x="12" y="5" width="3" height="1" fill="#cdd5df"/><rect x="1" y="7" width="3" height="1" fill="#cdd5df"/><rect x="12" y="7" width="3" height="1" fill="#cdd5df"/><rect x="1" y="9" width="3" height="1" fill="#cdd5df"/><rect x="12" y="9" width="3" height="1" fill="#cdd5df"/><rect x="1" y="11" width="3" height="1" fill="#cdd5df"/><rect x="12" y="11" width="3" height="1" fill="#cdd5df"/><rect x="1" y="13" width="3" height="1" fill="#cdd5df"/><rect x="12" y="13" width="3" height="1" fill="#cdd5df"/></g><rect x="4" y="2" width="8" height="12.8" fill="url(#gc)"/><path d="M5.4 1 L8 3.6 L10.6 1 Z" fill="#0b0b0b"/><path d="M4 2 L5.6 2 L8 4.4 L10.4 2 L12 2 L12 2.8 L10.8 2.8 L8 5.4 L5.2 2.8 L4 2.8 Z" fill="#9c9c9c" opacity="0.55"/><rect x="4" y="14" width="8" height="0.8" fill="#a8a8a8"/></svg></div>
<div class="t" style="left:49.00px;top:611px;letter-spacing:-0.136px;">Clocks</div>
<div class="i" style="left:47px;top:629px"><svg width="16" height="16" viewBox="0 0 16 16" shape-rendering="crispEdges"><rect x="0" y="0" width="16" height="16" fill="#141414"/><rect x="1" y="1" width="14" height="14" fill="#2a6650"/><rect x="2" y="2" width="12" height="12" fill="#33755a"/><rect x="4" y="4" width="8" height="8" fill="url(#gw)"/><g fill="#e0b040"><rect x="2" y="0" width="1" height="1"/><rect x="4" y="0" width="1" height="1"/><rect x="6" y="0" width="1" height="1"/><rect x="8" y="0" width="1" height="1"/><rect x="10" y="0" width="1" height="1"/><rect x="12" y="0" width="1" height="1"/><rect x="14" y="0" width="1" height="1"/><rect x="1" y="15" width="1" height="1"/><rect x="3" y="15" width="1" height="1"/><rect x="5" y="15" width="1" height="1"/><rect x="7" y="15" width="1" height="1"/><rect x="9" y="15" width="1" height="1"/><rect x="11" y="15" width="1" height="1"/><rect x="13" y="15" width="1" height="1"/><rect x="0" y="1" width="1" height="1"/><rect x="0" y="3" width="1" height="1"/><rect x="0" y="5" width="1" height="1"/><rect x="0" y="7" width="1" height="1"/><rect x="0" y="9" width="1" height="1"/><rect x="0" y="11" width="1" height="1"/><rect x="0" y="13" width="1" height="1"/><rect x="15" y="2" width="1" height="1"/><rect x="15" y="4" width="1" height="1"/><rect x="15" y="6" width="1" height="1"/><rect x="15" y="8" width="1" height="1"/><rect x="15" y="10" width="1" height="1"/><rect x="15" y="12" width="1" height="1"/><rect x="15" y="14" width="1" height="1"/></g></svg></div>
<div class="t" style="left:65.00px;top:630px;letter-spacing:-0.276px;">CPU Clock</div>
<div class="n" style="left:185.7px;top:630px">4738</div>
<div class="n" style="left:252.7px;top:630px">1210</div>
<div class="n" style="left:319.7px;top:630px">4738</div>
<div class="n" style="left:386.7px;top:630px">4631.3</div>
<div class="i" style="left:47px;top:648px"><svg width="16" height="16" viewBox="0 0 16 16" ><rect x="0.5" y="2.2" width="15" height="12.6" rx="0.8" fill="#0b0b0b"/><rect x="3.2" y="1" width="9.6" height="15" rx="1.2" fill="#0b0b0b"/><g shape-rendering="crispEdges"><rect x="1" y="3" width="3" height="1" fill="#cdd5df"/><rect x="12" y="3" width="3" height="1" fill="#cdd5df"/><rect x="1" y="5" width="3" height="1" fill="#cdd5df"/><rect x="12" y="5" width="3" height="1" fill="#cdd5df"/><rect x="1" y="7" width="3" height="1" fill="#cdd5df"/><rect x="12" y="7" width="3" height="1" fill="#cdd5df"/><rect x="1" y="9" width="3" height="1" fill="#cdd5df"/><rect x="12" y="9" width="3" height="1" fill="#cdd5df"/><rect x="1" y="11" width="3" height="1" fill="#cdd5df"/><rect x="12" y="11" width="3" height="1" fill="#cdd5df"/><rect x="1" y="13" width="3" height="1" fill="#cdd5df"/><rect x="12" y="13" width="3" height="1" fill="#cdd5df"/></g><rect x="4" y="2" width="8" height="12.8" fill="url(#gc)"/><path d="M5.4 1 L8 3.6 L10.6 1 Z" fill="#0b0b0b"/><path d="M4 2 L5.6 2 L8 4.4 L10.4 2 L12 2 L12 2.8 L10.8 2.8 L8 5.4 L5.2 2.8 L4 2.8 Z" fill="#9c9c9c" opacity="0.55"/><rect x="4" y="14" width="8" height="0.8" fill="#a8a8a8"/></svg></div>
<div class="t" style="left:65.00px;top:649px;letter-spacing:0.027px;">North Bridge Clock</div>
<div class="n" style="left:185.7px;top:649px">4335</div>
<div class="n" style="left:252.7px;top:649px">907</div>
<div class="n" style="left:319.7px;top:649px">4335</div>
<div class="n" style="left:386.7px;top:649px">4232.9</div>
<div class="i" style="left:47px;top:667px"><svg width="16" height="16" viewBox="0 0 16 16" shape-rendering="crispEdges"><rect x="0" y="0" width="16" height="16" fill="#141414"/><rect x="1" y="1" width="14" height="14" fill="#2a6650"/><rect x="2" y="2" width="12" height="12" fill="#33755a"/><rect x="4" y="4" width="8" height="8" fill="url(#gw)"/><g fill="#e0b040"><rect x="2" y="0" width="1" height="1"/><rect x="4" y="0" width="1" height="1"/><rect x="6" y="0" width="1" height="1"/><rect x="8" y="0" width="1" height="1"/><rect x="10" y="0" width="1" height="1"/><rect x="12" y="0" width="1" height="1"/><rect x="14" y="0" width="1" height="1"/><rect x="1" y="15" width="1" height="1"/><rect x="3" y="15" width="1" height="1"/><rect x="5" y="15" width="1" height="1"/><rect x="7" y="15" width="1" height="1"/><rect x="9" y="15" width="1" height="1"/><rect x="11" y="15" width="1" height="1"/><rect x="13" y="15" width="1" height="1"/><rect x="0" y="1" width="1" height="1"/><rect x="0" y="3" width="1" height="1"/><rect x="0" y="5" width="1" height="1"/><rect x="0" y="7" width="1" height="1"/><rect x="0" y="9" width="1" height="1"/><rect x="0" y="11" width="1" height="1"/><rect x="0" y="13" width="1" height="1"/><rect x="15" y="2" width="1" height="1"/><rect x="15" y="4" width="1" height="1"/><rect x="15" y="6" width="1" height="1"/><rect x="15" y="8" width="1" height="1"/><rect x="15" y="10" width="1" height="1"/><rect x="15" y="12" width="1" height="1"/><rect x="15" y="14" width="1" height="1"/></g></svg></div>
<div class="t" style="left:65.00px;top:668px;letter-spacing:-0.265px;">CPU Core #1 Clock</div>
<div class="n" style="left:185.7px;top:668px">4738</div>
<div class="n" style="left:252.7px;top:668px">1613</div>
<div class="n" style="left:319.7px;top:668px">4738</div>
<div class="n" style="left:386.7px;top:668px">4647.1</div>
<div class="i" style="left:47px;top:686px"><svg width="16" height="16" viewBox="0 0 16 16" shape-rendering="crispEdges"><rect x="0" y="0" width="16" height="16" fill="#141414"/><rect x="1" y="1" width="14" height="14" fill="#2a6650"/><rect x="2" y="2" width="12" height="12" fill="#33755a"/><rect x="4" y="4" width="8" height="8" fill="url(#gw)"/><g fill="#e0b040"><rect x="2" y="0" width="1" height="1"/><rect x="4" y="0" width="1" height="1"/><rect x="6" y="0" width="1" height="1"/><rect x="8" y="0" width="1" height="1"/><rect x="10" y="0" width="1" height="1"/><rect x="12" y="0" width="1" height="1"/><rect x="14" y="0" width="1" height="1"/><rect x="1" y="15" width="1" height="1"/><rect x="3" y="15" width="1" height="1"/><rect x="5" y="15" width="1" height="1"/><rect x="7" y="15" width="1" height="1"/><rect x="9" y="15" width="1" height="1"/><rect x="11" y="15" width="1" height="1"/><rect x="13" y="15" width="1" height="1"/><rect x="0" y="1" width="1" height="1"/><rect x="0" y="3" width="1" height="1"/><rect x="0" y="5" width="1" height="1"/><rect x="0" y="7" width="1" height="1"/><rect x="0" y="9" width="1" height="1"/><rect x="0" y="11" width="1" height="1"/><rect x="0" y="13" width="1" height="1"/><rect x="15" y="2" width="1" height="1"/><rect x="15" y="4" width="1" height="1"/><rect x="15" y="6" width="1" height="1"/><rect x="15" y="8" width="1" height="1"/><rect x="15" y="10" width="1" height="1"/><rect x="15" y="12" width="1" height="1"/><rect x="15" y="14" width="1" height="1"/></g></svg></div>
<div class="t" style="left:65.00px;top:687px;letter-spacing:-0.265px;">CPU Core #2 Clock</div>
<div class="n" style="left:185.7px;top:687px">4738</div>
<div class="n" style="left:252.7px;top:687px">806</div>
<div class="n" style="left:319.7px;top:687px">4738</div>
<div class="n" style="left:386.7px;top:687px">3008.6</div>
<div class="i" style="left:47px;top:705px"><svg width="16" height="16" viewBox="0 0 16 16" shape-rendering="crispEdges"><rect x="0" y="0" width="16" height="16" fill="#141414"/><rect x="1" y="1" width="14" height="14" fill="#2a6650"/><rect x="2" y="2" width="12" height="12" fill="#33755a"/><rect x="4" y="4" width="8" height="8" fill="url(#gw)"/><g fill="#e0b040"><rect x="2" y="0" width="1" height="1"/><rect x="4" y="0" width="1" height="1"/><rect x="6" y="0" width="1" height="1"/><rect x="8" y="0" width="1" height="1"/><rect x="10" y="0" width="1" height="1"/><rect x="12" y="0" width="1" height="1"/><rect x="14" y="0" width="1" height="1"/><rect x="1" y="15" width="1" height="1"/><rect x="3" y="15" width="1" height="1"/><rect x="5" y="15" width="1" height="1"/><rect x="7" y="15" width="1" height="1"/><rect x="9" y="15" width="1" height="1"/><rect x="11" y="15" width="1" height="1"/><rect x="13" y="15" width="1" height="1"/><rect x="0" y="1" width="1" height="1"/><rect x="0" y="3" width="1" height="1"/><rect x="0" y="5" width="1" height="1"/><rect x="0" y="7" width="1" height="1"/><rect x="0" y="9" width="1" height="1"/><rect x="0" y="11" width="1" height="1"/><rect x="0" y="13" width="1" height="1"/><rect x="15" y="2" width="1" height="1"/><rect x="15" y="4" width="1" height="1"/><rect x="15" y="6" width="1" height="1"/><rect x="15" y="8" width="1" height="1"/><rect x="15" y="10" width="1" height="1"/><rect x="15" y="12" width="1" height="1"/><rect x="15" y="14" width="1" height="1"/></g></svg></div>
<div class="t" style="left:65.00px;top:706px;letter-spacing:-0.265px;">CPU Core #3 Clock</div>
<div class="n" style="left:185.7px;top:706px">4738</div>
<div class="n" style="left:252.7px;top:706px">806</div>
<div class="n" style="left:319.7px;top:706px">4738</div>
<div class="n" style="left:386.7px;top:706px">3029.2</div>
<div class="i" style="left:47px;top:724px"><svg width="16" height="16" viewBox="0 0 16 16" shape-rendering="crispEdges"><rect x="0" y="0" width="16" height="16" fill="#141414"/><rect x="1" y="1" width="14" height="14" fill="#2a6650"/><rect x="2" y="2" width="12" height="12" fill="#33755a"/><rect x="4" y="4" width="8" height="8" fill="url(#gw)"/><g fill="#e0b040"><rect x="2" y="0" width="1" height="1"/><rect x="4" y="0" width="1" height="1"/><rect x="6" y="0" width="1" height="1"/><rect x="8" y="0" width="1" height="1"/><rect x="10" y="0" width="1" height="1"/><rect x="12" y="0" width="1" height="1"/><rect x="14" y="0" width="1" height="1"/><rect x="1" y="15" width="1" height="1"/><rect x="3" y="15" width="1" height="1"/><rect x="5" y="15" width="1" height="1"/><rect x="7" y="15" width="1" height="1"/><rect x="9" y="15" width="1" height="1"/><rect x="11" y="15" width="1" height="1"/><rect x="13" y="15" width="1" height="1"/><rect x="0" y="1" width="1" height="1"/><rect x="0" y="3" width="1" height="1"/><rect x="0" y="5" width="1" height="1"/><rect x="0" y="7" width="1" height="1"/><rect x="0" y="9" width="1" height="1"/><rect x="0" y="11" width="1" height="1"/><rect x="0" y="13" width="1" height="1"/><rect x="15" y="2" width="1" height="1"/><rect x="15" y="4" width="1" height="1"/><rect x="15" y="6" width="1" height="1"/><rect x="15" y="8" width="1" height="1"/><rect x="15" y="10" width="1" height="1"/><rect x="15" y="12" width="1" height="1"/><rect x="15" y="14" width="1" height="1"/></g></svg></div>
<div class="t" style="left:65.00px;top:725px;letter-spacing:-0.265px;">CPU Core #4 Clock</div>
<div class="n" style="left:185.7px;top:725px">4738</div>
<div class="n" style="left:252.7px;top:725px">1109</div>
<div class="n" style="left:319.7px;top:725px">4738</div>
<div class="n" style="left:386.7px;top:725px">4647.1</div>
<div class="i" style="left:47px;top:743px"><svg width="16" height="16" viewBox="0 0 16 16" shape-rendering="crispEdges"><rect x="0" y="0" width="16" height="16" fill="#141414"/><rect x="1" y="1" width="14" height="14" fill="#2a6650"/><rect x="2" y="2" width="12" height="12" fill="#33755a"/><rect x="4" y="4" width="8" height="8" fill="url(#gw)"/><g fill="#e0b040"><rect x="2" y="0" width="1" height="1"/><rect x="4" y="0" width="1" height="1"/><rect x="6" y="0" width="1" height="1"/><rect x="8" y="0" width="1" height="1"/><rect x="10" y="0" width="1" height="1"/><rect x="12" y="0" width="1" height="1"/><rect x="14" y="0" width="1" height="1"/><rect x="1" y="15" width="1" height="1"/><rect x="3" y="15" width="1" height="1"/><rect x="5" y="15" width="1" height="1"/><rect x="7" y="15" width="1" height="1"/><rect x="9" y="15" width="1" height="1"/><rect x="11" y="15" width="1" height="1"/><rect x="13" y="15" width="1" height="1"/><rect x="0" y="1" width="1" height="1"/><rect x="0" y="3" width="1" height="1"/><rect x="0" y="5" width="1" height="1"/><rect x="0" y="7" width="1" height="1"/><rect x="0" y="9" width="1" height="1"/><rect x="0" y="11" width="1" height="1"/><rect x="0" y="13" width="1" height="1"/><rect x="15" y="2" width="1" height="1"/><rect x="15" y="4" width="1" height="1"/><rect x="15" y="6" width="1" height="1"/><rect x="15" y="8" width="1" height="1"/><rect x="15" y="10" width="1" height="1"/><rect x="15" y="12" width="1" height="1"/><rect x="15" y="14" width="1" height="1"/></g></svg></div>
<div class="t" style="left:65.00px;top:744px;letter-spacing:-0.265px;">CPU Core #5 Clock</div>
<div class="n" style="left:185.7px;top:744px">4738</div>
<div class="n" style="left:252.7px;top:744px">1915</div>
<div class="n" style="left:319.7px;top:744px">4738</div>
<div class="n" style="left:386.7px;top:744px">4649.5</div>
<div class="i" style="left:47px;top:762px"><svg width="16" height="16" viewBox="0 0 16 16" shape-rendering="crispEdges"><rect x="0" y="0" width="16" height="16" fill="#141414"/><rect x="1" y="1" width="14" height="14" fill="#2a6650"/><rect x="2" y="2" width="12" height="12" fill="#33755a"/><rect x="4" y="4" width="8" height="8" fill="url(#gw)"/><g fill="#e0b040"><rect x="2" y="0" width="1" height="1"/><rect x="4" y="0" width="1" height="1"/><rect x="6" y="0" width="1" height="1"/><rect x="8" y="0" width="1" height="1"/><rect x="10" y="0" width="1" height="1"/><rect x="12" y="0" width="1" height="1"/><rect x="14" y="0" width="1" height="1"/><rect x="1" y="15" width="1" height="1"/><rect x="3" y="15" width="1" height="1"/><rect x="5" y="15" width="1" height="1"/><rect x="7" y="15" width="1" height="1"/><rect x="9" y="15" width="1" height="1"/><rect x="11" y="15" width="1" height="1"/><rect x="13" y="15" width="1" height="1"/><rect x="0" y="1" width="1" height="1"/><rect x="0" y="3" width="1" height="1"/><rect x="0" y="5" width="1" height="1"/><rect x="0" y="7" width="1" height="1"/><rect x="0" y="9" width="1" height="1"/><rect x="0" y="11" width="1" height="1"/><rect x="0" y="13" width="1" height="1"/><rect x="15" y="2" width="1" height="1"/><rect x="15" y="4" width="1" height="1"/><rect x="15" y="6" width="1" height="1"/><rect x="15" y="8" width="1" height="1"/><rect x="15" y="10" width="1" height="1"/><rect x="15" y="12" width="1" height="1"/><rect x="15" y="14" width="1" height="1"/></g></svg></div>
<div class="t" style="left:65.00px;top:763px;letter-spacing:-0.265px;">CPU Core #6 Clock</div>
<div class="n" style="left:185.7px;top:763px">4738</div>
<div class="n" style="left:252.7px;top:763px">806</div>
<div class="n" style="left:319.7px;top:763px">4738</div>
<div class="n" style="left:386.7px;top:763px">4624.0</div>
<div class="i" style="left:47px;top:781px"><svg width="16" height="16" viewBox="0 0 16 16" shape-rendering="crispEdges"><rect x="0" y="0" width="16" height="16" fill="#141414"/><rect x="1" y="1" width="14" height="14" fill="#2a6650"/><rect x="2" y="2" width="12" height="12" fill="#33755a"/><rect x="4" y="4" width="8" height="8" fill="url(#gw)"/><g fill="#e0b040"><rect x="2" y="0" width="1" height="1"/><rect x="4" y="0" width="1" height="1"/><rect x="6" y="0" width="1" height="1"/><rect x="8" y="0" width="1" height="1"/><rect x="10" y="0" width="1" height="1"/><rect x="12" y="0" width="1" height="1"/><rect x="14" y="0" width="1" height="1"/><rect x="1" y="15" width="1" height="1"/><rect x="3" y="15" width="1" height="1"/><rect x="5" y="15" width="1" height="1"/><rect x="7" y="15" width="1" height="1"/><rect x="9" y="15" width="1" height="1"/><rect x="11" y="15" width="1" height="1"/><rect x="13" y="15" width="1" height="1"/><rect x="0" y="1" width="1" height="1"/><rect x="0" y="3" width="1" height="1"/><rect x="0" y="5" width="1" height="1"/><rect x="0" y="7" width="1" height="1"/><rect x="0" y="9" width="1" height="1"/><rect x="0" y="11" width="1" height="1"/><rect x="0" y="13" width="1" height="1"/><rect x="15" y="2" width="1" height="1"/><rect x="15" y="4" width="1" height="1"/><rect x="15" y="6" width="1" height="1"/><rect x="15" y="8" width="1" height="1"/><rect x="15" y="10" width="1" height="1"/><rect x="15" y="12" width="1" height="1"/><rect x="15" y="14" width="1" height="1"/></g></svg></div>
<div class="t" style="left:65.00px;top:782px;letter-spacing:-0.265px;">CPU Core #7 Clock</div>
<div class="n" style="left:185.7px;top:782px">4738</div>
<div class="n" style="left:252.7px;top:782px">806</div>
<div class="n" style="left:319.7px;top:782px">4738</div>
<div class="n" style="left:386.7px;top:782px">4643.4</div>
<div class="i" style="left:47px;top:800px"><svg width="16" height="16" viewBox="0 0 16 16" shape-rendering="crispEdges"><rect x="0" y="0" width="16" height="16" fill="#141414"/><rect x="1" y="1" width="14" height="14" fill="#2a6650"/><rect x="2" y="2" width="12" height="12" fill="#33755a"/><rect x="4" y="4" width="8" height="8" fill="url(#gw)"/><g fill="#e0b040"><rect x="2" y="0" width="1" height="1"/><rect x="4" y="0" width="1" height="1"/><rect x="6" y="0" width="1" height="1"/><rect x="8" y="0" width="1" height="1"/><rect x="10" y="0" width="1" height="1"/><rect x="12" y="0" width="1" height="1"/><rect x="14" y="0" width="1" height="1"/><rect x="1" y="15" width="1" height="1"/><rect x="3" y="15" width="1" height="1"/><rect x="5" y="15" width="1" height="1"/><rect x="7" y="15" width="1" height="1"/><rect x="9" y="15" width="1" height="1"/><rect x="11" y="15" width="1" height="1"/><rect x="13" y="15" width="1" height="1"/><rect x="0" y="1" width="1" height="1"/><rect x="0" y="3" width="1" height="1"/><rect x="0" y="5" width="1" height="1"/><rect x="0" y="7" width="1" height="1"/><rect x="0" y="9" width="1" height="1"/><rect x="0" y="11" width="1" height="1"/><rect x="0" y="13" width="1" height="1"/><rect x="15" y="2" width="1" height="1"/><rect x="15" y="4" width="1" height="1"/><rect x="15" y="6" width="1" height="1"/><rect x="15" y="8" width="1" height="1"/><rect x="15" y="10" width="1" height="1"/><rect x="15" y="12" width="1" height="1"/><rect x="15" y="14" width="1" height="1"/></g></svg></div>
<div class="t" style="left:65.00px;top:801px;letter-spacing:-0.265px;">CPU Core #8 Clock</div>
<div class="n" style="left:185.7px;top:801px">4738</div>
<div class="n" style="left:252.7px;top:801px">806</div>
<div class="n" style="left:319.7px;top:801px">4738</div>
<div class="n" style="left:386.7px;top:801px">4690.8</div>
<div class="i" style="left:31px;top:819px"><svg width="16" height="16" viewBox="0 0 16 16" shape-rendering="crispEdges"><rect x="0" y="0" width="16" height="16" fill="#141414"/><rect x="1" y="1" width="14" height="14" fill="#2a6650"/><rect x="2" y="2" width="12" height="12" fill="#33755a"/><rect x="4" y="4" width="8" height="8" fill="url(#gw)"/><g fill="#e0b040"><rect x="2" y="0" width="1" height="1"/><rect x="4" y="0" width="1" height="1"/><rect x="6" y="0" width="1" height="1"/><rect x="8" y="0" width="1" height="1"/><rect x="10" y="0" width="1" height="1"/><rect x="12" y="0" width="1" height="1"/><rect x="14" y="0" width="1" height="1"/><rect x="1" y="15" width="1" height="1"/><rect x="3" y="15" width="1" height="1"/><rect x="5" y="15" width="1" height="1"/><rect x="7" y="15" width="1" height="1"/><rect x="9" y="15" width="1" height="1"/><rect x="11" y="15" width="1" height="1"/><rect x="13" y="15" width="1" height="1"/><rect x="0" y="1" width="1" height="1"/><rect x="0" y="3" width="1" height="1"/><rect x="0" y="5" width="1" height="1"/><rect x="0" y="7" width="1" height="1"/><rect x="0" y="9" width="1" height="1"/><rect x="0" y="11" width="1" height="1"/><rect x="0" y="13" width="1" height="1"/><rect x="15" y="2" width="1" height="1"/><rect x="15" y="4" width="1" height="1"/><rect x="15" y="6" width="1" height="1"/><rect x="15" y="8" width="1" height="1"/><rect x="15" y="10" width="1" height="1"/><rect x="15" y="12" width="1" height="1"/><rect x="15" y="14" width="1" height="1"/></g></svg></div>
<div class="t" style="left:49.00px;top:820px;letter-spacing:-0.715px;">CPU</div>
<div class="i" style="left:47px;top:838px"><svg width="16" height="16" viewBox="0 0 16 16" ><rect x="3" y="1" width="10" height="1.6" fill="#4e4e4e"/><rect x="3" y="14" width="10" height="1.6" fill="#4e4e4e"/><path d="M3.6 2.6 L12.4 14 M12.4 2.6 L3.6 14" stroke="#565656" stroke-width="1" fill="none"/><path d="M6 5.2 H10 L8 7.6 Z" fill="#f2b03c"/><path d="M8 11.4 L11.8 14 H4.2 Z" fill="#f2b03c"/></svg></div>
<div class="t" style="left:65.00px;top:839px;letter-spacing:-0.100px;">CPU Utilization</div>
<div class="n" style="left:185.7px;top:839px">7</div>
<div class="n" style="left:252.7px;top:839px">4</div>
<div class="n" style="left:319.7px;top:839px">16</div>
<div class="n" style="left:386.7px;top:839px">8.4</div>
<div class="i" style="left:47px;top:857px"><svg width="16" height="16" viewBox="0 0 16 16" shape-rendering="crispEdges"><rect x="0" y="0" width="16" height="16" fill="#141414"/><rect x="1" y="1" width="14" height="14" fill="#2a6650"/><rect x="2" y="2" width="12" height="12" fill="#33755a"/><rect x="4" y="4" width="8" height="8" fill="url(#gw)"/><g fill="#e0b040"><rect x="2" y="0" width="1" height="1"/><rect x="4" y="0" width="1" height="1"/><rect x="6" y="0" width="1" height="1"/><rect x="8" y="0" width="1" height="1"/><rect x="10" y="0" width="1" height="1"/><rect x="12" y="0" width="1" height="1"/><rect x="14" y="0" width="1" height="1"/><rect x="1" y="15" width="1" height="1"/><rect x="3" y="15" width="1" height="1"/><rect x="5" y="15" width="1" height="1"/><rect x="7" y="15" width="1" height="1"/><rect x="9" y="15" width="1" height="1"/><rect x="11" y="15" width="1" height="1"/><rect x="13" y="15" width="1" height="1"/><rect x="0" y="1" width="1" height="1"/><rect x="0" y="3" width="1" height="1"/><rect x="0" y="5" width="1" height="1"/><rect x="0" y="7" width="1" height="1"/><rect x="0" y="9" width="1" height="1"/><rect x="0" y="11" width="1" height="1"/><rect x="0" y="13" width="1" height="1"/><rect x="15" y="2" width="1" height="1"/><rect x="15" y="4" width="1" height="1"/><rect x="15" y="6" width="1" height="1"/><rect x="15" y="8" width="1" height="1"/><rect x="15" y="10" width="1" height="1"/><rect x="15" y="12" width="1" height="1"/><rect x="15" y="14" width="1" height="1"/></g></svg></div>
<div class="t" style="left:65.00px;top:858px;letter-spacing:0.023px;">CPU Throttling</div>
<div class="n" style="left:185.7px;top:858px">0</div>
<div class="n" style="left:252.7px;top:858px">0</div>
<div class="n" style="left:319.7px;top:858px">0</div>
<div class="n" style="left:386.7px;top:858px">0.0</div>
<div class="a" style="left:773px;top:0;width:2px;height:913px;background:#181818;border-left:1px solid #343434;border-top-left-radius:3px"></div>
<div class="a" style="left:773px;top:78px;width:2px;height:2px;background:#d8dce4"></div>
<div class="a" style="left:773px;top:80px;width:2px;height:2px;background:#101010"></div>
<div class="a" style="left:773px;top:82px;width:2px;height:1px;background:#1c3f7a"></div>
<div class="a" style="left:773px;top:83px;width:2px;height:2px;background:#d9cdb8"></div>
<div class="a" style="left:773px;top:208px;width:2px;height:2px;background:#e6e6e6"></div>
<div class="a" style="left:773px;top:229px;width:2px;height:2px;background:#dcdcdc"></div>
<div class="a" style="left:773px;top:244px;width:2px;height:1px;background:#70757f"></div>
</body></html>
